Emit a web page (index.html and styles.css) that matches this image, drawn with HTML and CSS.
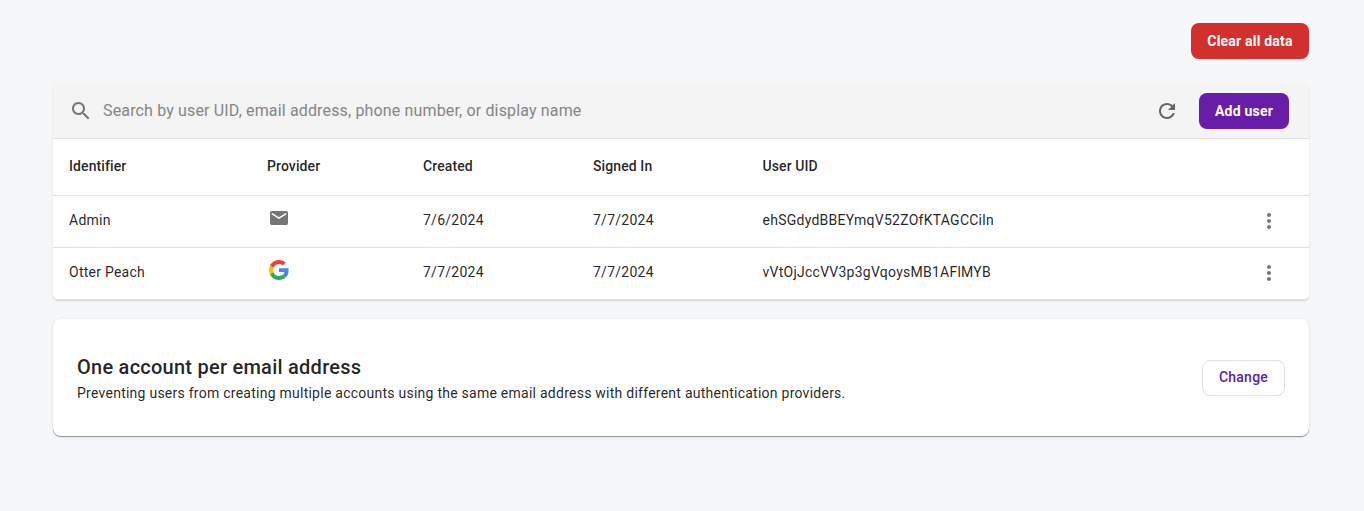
FILE: index.html
```html
<!DOCTYPE html>
<html lang="en">
<head>
<meta charset="utf-8">
<title>Users</title>
<link rel="stylesheet" href="styles.css">
</head>
<body>
<main class="page">
  <div class="actions"><button class="btn btn-danger">Clear all data</button></div>
  <section class="card users">
    <div class="toolbar">
      <svg class="icon search-icon" viewBox="0 0 24 24"><path d="M15.5 14h-.79l-.28-.27C15.41 12.59 16 11.11 16 9.500 16 5.910 13.090 3 9.500 3S3 5.910 3 9.500 5.910 16 9.500 16c1.610 0 3.090-.590 4.230-1.570l.270.280v.790l5 4.990L20.490 19l-4.990-5zm-6 0C7.010 14 5 11.990 5 9.500S7.010 5 9.500 5 14 7.010 14 9.500 11.990 14 9.500 14z"/></svg>
      <input class="search" type="text" placeholder="Search by user UID, email address, phone number, or display name">
      <svg class="icon refresh-icon" viewBox="0 0 24 24"><path d="M17.65 6.35C16.2 4.9 14.21 4 12 4c-4.420 0-7.990 3.580-7.990 8s3.570 8 7.990 8c3.730 0 6.840-2.550 7.730-6h-2.080c-.820 2.330-3.040 4-5.650 4-3.310 0-6-2.690-6-6s2.690-6 6-6c1.660 0 3.140.690 4.220 1.780L13 11h7V4l-2.350 2.350z"/></svg>
      <button class="btn btn-primary">Add user</button>
    </div>
    <div class="row head"><span>Identifier</span><span>Provider</span><span>Created</span><span>Signed In</span><span>User UID</span></div>
    <div class="row">
      <span>Admin</span>
      <span class="provider"><svg class="icon mail-icon" viewBox="0 0 20 20"><path d="M17.200 3H2.800C1.800 3 1 3.800 1 4.800v10.400c0 1 .800 1.800 1.800 1.800h14.400c1 0 1.800-.800 1.800-1.800V4.800c0-1-.800-1.800-1.800-1.800zm0 3.500L10 11 2.800 6.500V4.800L10 9.300l7.200-4.500v1.700z"/></svg></span>
      <span>7/6/2024</span><span>7/7/2024</span><span>ehSGdydBBEYmqV52ZOfKTAGCCiln</span>
      <svg class="icon more-icon" viewBox="0 0 24 24"><path d="M12 8c1.100 0 2-.900 2-2s-.900-2-2-2-2 .900-2 2 .900 2 2 2zm0 2c-1.100 0-2 .900-2 2s.900 2 2 2 2-.900 2-2-.900-2-2-2zm0 6c-1.100 0-2 .900-2 2s.900 2 2 2 2-.900 2-2-.900-2-2-2z"/></svg>
    </div>
    <div class="row">
      <span>Otter Peach</span>
      <span class="provider"><svg class="google-icon" viewBox="0 0 48 48"><path fill="#ea4335" d="M24 9.500c3.540 0 6.710 1.220 9.210 3.600l6.850-6.850C35.900 2.380 30.470 0 24 0 14.620 0 6.510 5.380 2.560 13.220l7.980 6.190C12.430 13.720 17.740 9.500 24 9.500z"/><path fill="#4285f4" d="M46.980 24.550c0-1.570-.150-3.090-.380-4.550H24v9.020h12.940c-.580 2.960-2.260 5.480-4.780 7.180l7.730 6c4.510-4.180 7.090-10.360 7.090-17.650z"/><path fill="#fbbc05" d="M10.530 28.590c-.480-1.450-.760-2.990-.760-4.590s.270-3.140.760-4.590l-7.980-6.190C.920 16.460 0 20.120 0 24c0 3.880.920 7.540 2.560 10.780l7.970-6.190z"/><path fill="#34a853" d="M24 48c6.480 0 11.930-2.130 15.890-5.810l-7.730-6c-2.150 1.450-4.920 2.300-8.160 2.300-6.260 0-11.570-4.220-13.470-9.910l-7.980 6.190C6.510 42.620 14.620 48 24 48z"/></svg></span>
      <span>7/7/2024</span><span>7/7/2024</span><span>vVtOjJccVV3p3gVqoysMB1AFlMYB</span>
      <svg class="icon more-icon" viewBox="0 0 24 24"><path d="M12 8c1.100 0 2-.900 2-2s-.900-2-2-2-2 .900-2 2 .900 2 2 2zm0 2c-1.100 0-2 .900-2 2s.900 2 2 2 2-.900 2-2-.900-2-2-2zm0 6c-1.100 0-2 .900-2 2s.900 2 2 2 2-.900 2-2-.900-2-2-2z"/></svg>
    </div>
  </section>
  <section class="card setting">
    <div><h2 class="title">One account per email address</h2><p class="description">Preventing users from creating multiple accounts using the same email address with different authentication providers.</p></div>
    <button class="btn btn-outline">Change</button>
  </section>
</main>
</body>
</html>
```

FILE: styles.css
```css
* { box-sizing: border-box; }
body { margin: 0; min-height: 100vh; background: #f6f7f9; color: rgba(0,0,0,.87); font-family: Roboto, sans-serif; font-size: 14px; }
.page { width: 1256px; min-height: 100vh; margin-left: 53px; padding-top: 23px; }
.actions { display: flex; justify-content: flex-end; margin-bottom: 24px; }
.btn { height: 36px; padding: 0; border: 0; border-radius: 8px; font: 500 14px/36px Roboto, sans-serif; letter-spacing: .25px; white-space: nowrap; }
.btn-danger { width: 118px; background: #d32f2f; color: #fff; font-weight: 700; letter-spacing: .2px; }
.btn-primary { width: 90px; background: #681da8; color: #fff; font-weight: 700; letter-spacing: .2px; }
.btn-outline { width: 83px; padding-bottom: 2px; border: 1px solid #e0e0e0; line-height: 32px; background: #fff; color: #5b21a6; }
.card { background: #fff; border-radius: 8px; }
.users { border-radius: 8px 8px 5px 5px; box-shadow: 0 1px 2px rgba(0,0,0,.14); }
.icon { display: block; fill: #757575; flex: none; }
.toolbar { height: 56px; display: flex; align-items: center; padding: 0 20px 0 16px; background: #f4f4f4; border-bottom: 1px solid #e0e0e0; border-radius: 8px 8px 0 0; }
.search-icon, .refresh-icon { width: 24px; height: 24px; }
.search { flex: 1; min-width: 0; margin: 0 0 0 10px; padding: 0; border: 0; background: none; font: 400 16px/24px Roboto, sans-serif; letter-spacing: .15px; }
.search::placeholder { color: #858585; opacity: 1; }
.refresh-icon { margin-right: 20px; fill: #666; }
.row { height: 52px; display: grid; grid-template-columns: 198px 156px 170px 169.500px 1fr 24px; padding: 0 28px 3px 16px; align-items: center; border-bottom: 1px solid #e0e0e0; letter-spacing: .25px; }
.row:last-child { border-radius: 0 0 5px 5px; }
.head { height: 57px; padding-bottom: 2px; font-weight: 500; letter-spacing: .1px; }
.provider { padding: 0 0 5px 2px; }
.mail-icon, .google-icon { width: 20px; height: 20px; display: block; }
.more-icon { width: 24px; height: 24px; margin-top: 1px; }
.setting { height: 117px; margin-top: 19px; padding: 0 24px; display: flex; align-items: center; justify-content: space-between; box-shadow: 0 1px 0 rgba(60,64,67,.45), 0 1px 3px rgba(0,0,0,.14); }
.setting > div { margin-bottom: 2px; }
.title { margin: 0; font: 500 20px/32px Roboto, sans-serif; letter-spacing: .25px; }
.description { margin: 0; font-size: 14px; line-height: 20px; letter-spacing: .25px; }
```
